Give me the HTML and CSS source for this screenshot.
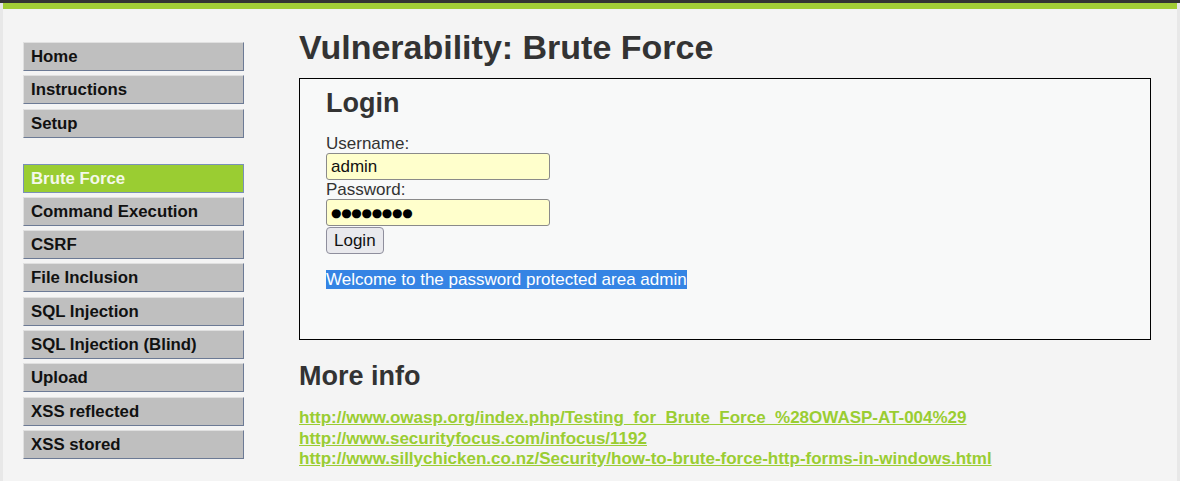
FILE: index.html
```html
<!DOCTYPE html>
<html>
<head>
<meta charset="utf-8">
<title>Vulnerability: Brute Force</title>
<link rel="stylesheet" href="styles.css">
</head>
<body>
<div class="topbar"></div>
<div class="wrap">
  <div class="greenbar"></div>
  <div class="layout">
    <nav class="menu">
      <ul class="group">
        <li><a href="#">Home</a></li>
        <li><a href="#">Instructions</a></li>
        <li><a href="#">Setup</a></li>
      </ul>
      <ul class="group">
        <li class="selected"><a href="#">Brute Force</a></li>
        <li><a href="#">Command Execution</a></li>
        <li><a href="#">CSRF</a></li>
        <li><a href="#">File Inclusion</a></li>
        <li><a href="#">SQL Injection</a></li>
        <li><a href="#">SQL Injection (Blind)</a></li>
        <li><a href="#">Upload</a></li>
        <li><a href="#">XSS reflected</a></li>
        <li><a href="#">XSS stored</a></li>
      </ul>
    </nav>
    <main class="body">
      <h1 class="title">Vulnerability: Brute Force</h1>
      <div class="vulnerable">
        <h2 class="sub">Login</h2>
        <form class="login">
          <label class="lbl">Username:</label>
          <input class="field" type="text" value="admin">
          <label class="lbl">Password:</label>
          <input class="field pw" type="text" value="●●●●●●●●" readonly>
          <button class="btn" type="button">Login</button>
        </form>
        <p class="welcome"><span class="sel">Welcome to the password protected area admin</span></p>
      </div>
      <h2 class="more">More info</h2>
      <ul class="links">
        <li><a href="#">http://www.owasp.org/index.php/Testing_for_Brute_Force_%28OWASP-AT-004%29</a></li>
        <li><a href="#">http://www.securityfocus.com/infocus/1192</a></li>
        <li><a href="#">http://www.sillychicken.co.nz/Security/how-to-brute-force-http-forms-in-windows.html</a></li>
      </ul>
    </main>
  </div>
</div>
</body>
</html>
```

FILE: styles.css
```css
html, body {
  margin: 0;
  padding: 0;
}
body {
  background: #e8e8e8;
  font-family: "Liberation Sans", Arial, sans-serif;
  color: #333;
  height: 481px;
  overflow: hidden;
}
.topbar {
  height: 3px;
  background: #333333;
}
.wrap {
  margin: 0 3px;
  background: #f4f4f4;
  height: 478px;
}
.greenbar {
  height: 6px;
  background: #a2cd36;
}
.layout {
  display: grid;
  grid-template-columns: 221px 1fr;
  column-gap: 55px;
  padding-left: 20px;
}
.menu {
  padding-top: 33px;
}
.group {
  list-style: none;
  margin: 0 0 26px 0;
  padding: 0;
}
.group li {
  margin-bottom: 4.3px;
}
.group li a {
  display: block;
  box-sizing: border-box;
  height: 29px;
  line-height: 27px;
  padding-left: 7px;
  background: #bfbfbf;
  border-top: 1px solid #e0e0e0;
  border-left: 1px solid #e0e0e0;
  border-right: 1px solid #6c7a95;
  border-bottom: 1px solid #6c7a95;
  color: #111;
  font-weight: bold;
  font-size: 16.8px;
  text-decoration: none;
}
.group li.selected a {
  background: #9acd32;
  border: 1px solid #7a90b8;
  color: #f4f8ea;
}
.body {
  padding-right: 26px;
}
.title {
  margin: 16px 0 0 0;
  font-size: 34px;
  line-height: 44px;
  font-weight: bold;
  color: #333;
}
.vulnerable {
  margin-top: 9px;
  border: 1px solid #000;
  background: #f8f9f9;
  height: 260px;
  padding: 0 26px;
}
.sub {
  margin: 8px 0 0 0;
  font-size: 27px;
  line-height: 32px;
  font-weight: bold;
  color: #333;
}
.login {
  display: flex;
  flex-direction: column;
  align-items: flex-start;
  margin-top: 15px;
}
.lbl {
  font-size: 17px;
  line-height: 19px;
  color: #333;
}
.field {
  box-sizing: border-box;
  width: 224px;
  height: 27px;
  margin: 0;
  padding: 0 4px;
  background: #ffffcc;
  border: 1px solid #8a8a8a;
  border-radius: 3px;
  font-family: "Liberation Sans", Arial, sans-serif;
  font-size: 17px;
  color: #111;
}
.pw {
  font-family: "DejaVu Sans", sans-serif;
  font-size: 12px;
  letter-spacing: -0.3px;
  color: #000;
  outline: none;
}
.btn {
  box-sizing: border-box;
  height: 27px;
  margin: 1px 0 0 0;
  padding: 0 7px;
  background: #e9e9ed;
  border: 1px solid #8f8f9d;
  border-radius: 4px;
  font-family: "Liberation Sans", Arial, sans-serif;
  font-size: 17px;
  color: #111;
}
.welcome {
  margin: 16px 0 0 0;
  font-size: 17px;
  line-height: 20px;
}
.sel {
  background: #3584e4;
  color: #fff;
}
.more {
  margin: 20px 0 0 0;
  font-size: 27px;
  line-height: 32px;
  font-weight: bold;
  color: #333;
}
.links {
  list-style: none;
  margin: 16px 0 0 0;
  padding: 0;
}
.links li {
  font-size: 17px;
  line-height: 20.5px;
  font-weight: bold;
}
.links a {
  color: #9acd32;
  text-decoration: underline;
}
```
